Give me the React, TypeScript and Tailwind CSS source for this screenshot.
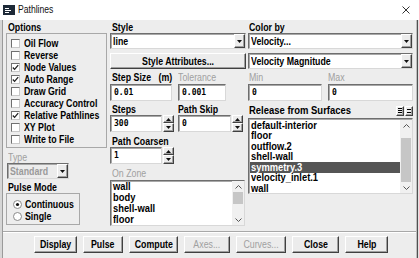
import React from "react";

const FONT = "font-['Liberation_Sans',Arial,sans-serif]";
const MONO = "font-['DejaVu_Sans_Mono','Liberation_Mono',monospace]";
const RAISED =
  "border border-t-white border-l-white border-r-[#404040] border-b-[#404040] shadow-[inset_-1px_-1px_0_#a0a0a0] bg-[#ececec]";
const SUNKEN =
  "border border-t-[#6e6e6e] border-l-[#6e6e6e] border-r-[#d8d8d8] border-b-[#d8d8d8] shadow-[inset_1px_1px_0_#a8a8a8]";

function T({ children, center, className = "" }: { children: React.ReactNode; center?: boolean; className?: string }) {
  return (
    <span
      className={`inline-block shrink-0 whitespace-nowrap leading-none scale-x-[0.8] ${center ? "origin-center" : "origin-left"} ${className}`}
    >
      {children}
    </span>
  );
}

function TriDown() {
  return (
    <svg width="5" height="3" viewBox="0 0 5 3">
      <path d="M0 0H5L2.5 3Z" fill="#111" />
    </svg>
  );
}
function TriUp() {
  return (
    <svg width="5" height="3" viewBox="0 0 5 3">
      <path d="M0 3H5L2.5 0Z" fill="#111" />
    </svg>
  );
}

function Dropdown({ text, disabled, className = "" }: { text: string; disabled?: boolean; className?: string }) {
  return (
    <div
      className={`h-[16px] flex items-center ${SUNKEN} ${disabled ? "bg-[#ececec] text-[#9a9a9a]" : "bg-white text-black"} ${className}`}
    >
      <div className="flex-1 min-w-0 pl-[2px] overflow-hidden flex items-center">
        <T className="font-bold text-[11px]">{text}</T>
      </div>
      <div className={`w-[11px] h-[14px] shrink-0 flex items-center justify-center ${RAISED}`}>
        <TriDown />
      </div>
    </div>
  );
}

function Label({ children, gray, className = "" }: { children: React.ReactNode; gray?: boolean; className?: string }) {
  return (
    <div
      className={`h-[12px] flex items-center text-[11px] ${
        gray ? "text-[#a0a0a0] font-normal" : "text-black font-bold"
      } ${className}`}
    >
      <T>{children}</T>
    </div>
  );
}

function Input({ value, className = "" }: { value: string; className?: string }) {
  return (
    <div className={`h-[17px] bg-white flex items-center pl-[3px] ${SUNKEN} ${className}`}>
      <span className={`${MONO} font-bold text-[8px] leading-none text-black`}>{value}</span>
    </div>
  );
}

function Spinner() {
  return (
    <div className="w-[11px] h-[17px] flex flex-col ml-[1px] shrink-0">
      <div className={`h-[8px] flex items-center justify-center ${RAISED}`}>
        <TriUp />
      </div>
      <div className={`h-[9px] flex items-center justify-center ${RAISED}`}>
        <TriDown />
      </div>
    </div>
  );
}

function Check({ label, checked }: { label: string; checked?: boolean }) {
  return (
    <div className="h-[12px] flex items-center">
      <div className="ml-[4px] w-[9px] h-[9px] shrink-0 bg-white border border-t-[#707070] border-l-[#707070] border-r-[#c8c8c8] border-b-[#c8c8c8] flex items-center justify-center">
        {checked && (
          <svg width="7" height="7" viewBox="0 0 7 7">
            <path d="M0.8 3.5L2.6 5.4L6.2 1.2" stroke="#222" strokeWidth="1.3" fill="none" />
          </svg>
        )}
      </div>
      <T className="ml-[4px] font-bold text-[11px] text-black">{label}</T>
    </div>
  );
}

function Radio({ label, checked }: { label: string; checked?: boolean }) {
  return (
    <div className="h-[12px] flex items-center">
      <svg className="ml-[6px] shrink-0" width="9" height="9" viewBox="0 0 9 9">
        <circle cx="4.5" cy="4.5" r="4" fill="white" stroke="#8a8a8a" strokeWidth="1" />
        {checked && <circle cx="4.5" cy="4.5" r="1.6" fill="#111" />}
      </svg>
      <T className="ml-[3px] font-bold text-[11px] text-black">{label}</T>
    </div>
  );
}

function Chevron({ up }: { up?: boolean }) {
  return (
    <svg width="7" height="4" viewBox="0 0 7 4">
      <path d={up ? "M0.5 3.5L3.5 0.5L6.5 3.5" : "M0.5 0.5L3.5 3.5L6.5 0.5"} stroke="#555" strokeWidth="1" fill="none" />
    </svg>
  );
}

function ListBox({
  items,
  selected,
  rowH,
  className = "",
  thumbTop,
  thumbH,
}: {
  items: string[];
  selected?: number;
  rowH: string;
  className?: string;
  thumbTop: string;
  thumbH: string;
}) {
  return (
    <div className={`bg-white flex ${SUNKEN} ${className}`}>
      <div className="flex-1 min-w-0 pl-[1px] overflow-hidden">
        {items.map((it, i) => (
          <div
            key={it}
            className={`${rowH} flex items-center pl-[1px] font-bold text-[11px] ${
              i === selected ? "bg-[#555555] text-white" : "text-black"
            }`}
          >
            <T className="scale-x-[0.85]">{it}</T>
          </div>
        ))}
      </div>
      <div className="w-[12px] shrink-0 bg-[#f0f0f0] flex flex-col items-center">
        <div className="h-[11px] flex items-center justify-center">
          <Chevron up />
        </div>
        <div className="flex-1 w-full relative">
          <div className={`absolute left-[1px] right-[1px] bg-[#c6c6c6] ${thumbTop} ${thumbH}`} />
        </div>
        <div className="h-[11px] flex items-center justify-center">
          <Chevron />
        </div>
      </div>
    </div>
  );
}

function Btn({ text, w, disabled }: { text: string; w: string; disabled?: boolean }) {
  return (
    <div
      className={`h-[17px] ${w} flex items-center justify-center text-[11px] ${RAISED} ${
        disabled ? "text-[#a0a0a0] font-normal" : "text-black font-bold"
      }`}
    >
      <T center>{text}</T>
    </div>
  );
}

export default function App() {
  return (
    <div className={`w-[419px] h-[258px] overflow-hidden bg-[#ededed] flex flex-col ${FONT}`}>
      {/* Title bar */}
      <div className="h-[20px] bg-white flex items-center shrink-0">
        <div className="ml-[3px] w-[12px] h-[10px] bg-[#1e2a38] flex flex-col justify-center gap-[1px] pl-[2px]">
          <div className="w-[4px] h-[1px] bg-white" />
          <div className="w-[6px] h-[1px] bg-white" />
          <div className="w-[4px] h-[1px] bg-white" />
        </div>
        <T className="ml-[3px] text-[10px] text-[#111] font-normal scale-x-[0.86]">Pathlines</T>
        <div className="flex-1" />
        <svg className="mr-[9px]" width="8" height="8" viewBox="0 0 8 8">
          <path d="M0.5 0.5L7.5 7.5M7.5 0.5L0.5 7.5" stroke="#333" strokeWidth="1" />
        </svg>
      </div>

      <div className="flex flex-1">
        {/* left strip (window behind) */}
        <div className="w-[3px] bg-[#d6d6d6] border-r border-[#9a9a9a]" />

        {/* dialog body */}
        <div className="flex-1 flex flex-col pt-[1px]">
          <div className="h-[210px] flex pl-[3px]">
            {/* Left column */}
            <div className="w-[101px] flex flex-col">
              <Label className="pl-[2px]">Options</Label>
              <div className="h-[115px] border border-[#a8a8a8] pt-[3px]">
                <Check label="Oil Flow" />
                <Check label="Reverse" />
                <Check label="Node Values" checked />
                <Check label="Auto Range" checked />
                <Check label="Draw Grid" />
                <Check label="Accuracy Control" />
                <Check label="Relative Pathlines" checked />
                <Check label="XY Plot" />
                <Check label="Write to File" />
              </div>
              <Label gray className="mt-[3px] pl-[2px]">
                Type
              </Label>
              <Dropdown text="Standard" disabled className="w-[62px] ml-[1px]" />
              <div className="mt-[3px] h-[11px] flex items-center pl-[2px] font-bold text-[11px]">
                <T>Pulse Mode</T>
              </div>
              <div className="w-[74px] h-[32px] border border-[#a8a8a8] pt-[4px]">
                <Radio label="Continuous" checked />
                <Radio label="Single" />
              </div>
            </div>

            {/* Middle column */}
            <div className="w-[136px] ml-[3px] flex flex-col">
              <Label className="pl-[2px]">Style</Label>
              <Dropdown text="line" />
              <div className={`mt-[4px] h-[16px] flex items-center justify-center font-bold text-[11px] ${RAISED}`}>
                <T center>Style Attributes...</T>
              </div>
              <div className="mt-[2px] flex">
                <Label className="pl-[2px] w-[68px]">Step Size&nbsp;&nbsp;&nbsp;(m)</Label>
                <Label gray>Tolerance</Label>
              </div>
              <div className="mt-[1px] flex">
                <Input value="0.01" className="w-[62px]" />
                <Input value="0.001" className="w-[48px] ml-[6px]" />
              </div>
              <div className="mt-[2px] flex">
                <Label className="pl-[2px] w-[68px]">Steps</Label>
                <Label>Path Skip</Label>
              </div>
              <div className="flex">
                <Input value="300" className="w-[52px]" />
                <Spinner />
                <Input value="0" className="w-[53px] ml-[4px]" />
                <Spinner />
              </div>
              <Label className="mt-[3px] pl-[2px]">Path Coarsen</Label>
              <div className="flex">
                <Input value="1" className="w-[52px]" />
                <Spinner />
              </div>
              <Label gray className="mt-[3px] pl-[2px]">
                On Zone
              </Label>
              <ListBox
                items={["wall", "body", "shell-wall", "floor"]}
                rowH="h-[11px]"
                className="mt-[1px] h-[46px] w-[135px]"
                thumbTop="top-[0px]"
                thumbH="h-[12px]"
              />
            </div>

            {/* Right column */}
            <div className="w-[165px] ml-[2px] flex flex-col">
              <Label className="pl-[1px]">Color by</Label>
              <Dropdown text="Velocity..." />
              <Dropdown text="Velocity Magnitude" className="mt-[4px]" />
              <div className="mt-[2px] flex">
                <Label gray className="pl-[1px] w-[80px]">
                  Min
                </Label>
                <Label gray>Max</Label>
              </div>
              <div className="mt-[1px] flex">
                <Input value="0" className="w-[74px]" />
                <Input value="0" className="w-[85px] ml-[6px]" />
              </div>
              <div className="mt-[3px] h-[13px] flex items-center">
                <div className="pl-[1px] font-bold text-[11px] flex-1 min-w-0 flex items-center">
                  <T className="scale-x-[0.86]">Release from Surfaces</T>
                </div>
                <div className={`w-[8px] h-[10px] shrink-0 flex flex-col items-center justify-center gap-[1px] ${RAISED}`}>
                  <div className="w-[4px] h-[1px] bg-black" />
                  <div className="w-[4px] h-[1px] bg-black" />
                  <div className="w-[4px] h-[1px] bg-black" />
                </div>
                <div className={`ml-[1px] w-[8px] h-[10px] shrink-0 flex flex-col items-center justify-center gap-[2px] ${RAISED}`}>
                  <div className="w-[4px] h-[1px] bg-black" />
                  <div className="w-[4px] h-[1px] bg-black" />
                </div>
              </div>
              <ListBox
                items={[
                  "default-interior",
                  "floor",
                  "outflow.2",
                  "shell-wall",
                  "symmetry.3",
                  "velocity_inlet.1",
                  "wall",
                ]}
                selected={4}
                rowH="h-[10.5px]"
                className="mt-[1px] h-[76px] pt-[1px]"
                thumbTop="top-[7px]"
                thumbH="h-[44px]"
              />
            </div>
          </div>

          {/* separator */}
          <div className="h-[2px] border-t border-[#a8a8a8] border-b border-b-white" />

          {/* buttons */}
          <div className="flex pt-[3px] pl-[31px] gap-[6px]">
            <Btn text="Display" w="w-[43px]" />
            <Btn text="Pulse" w="w-[40px]" />
            <Btn text="Compute" w="w-[49px]" />
            <Btn text="Axes..." w="w-[46px]" disabled />
            <Btn text="Curves..." w="w-[50px]" disabled />
            <Btn text="Close" w="w-[47px]" />
            <Btn text="Help" w="w-[43px]" />
          </div>
        </div>

        {/* right frame */}
        <div className="w-[3px] flex">
          <div className="w-[1px] bg-[#bdbdbd]" />
          <div className="w-[1px] bg-[#505050]" />
          <div className="w-[1px] bg-[#e2e2e2]" />
        </div>
      </div>
    </div>
  );
}
